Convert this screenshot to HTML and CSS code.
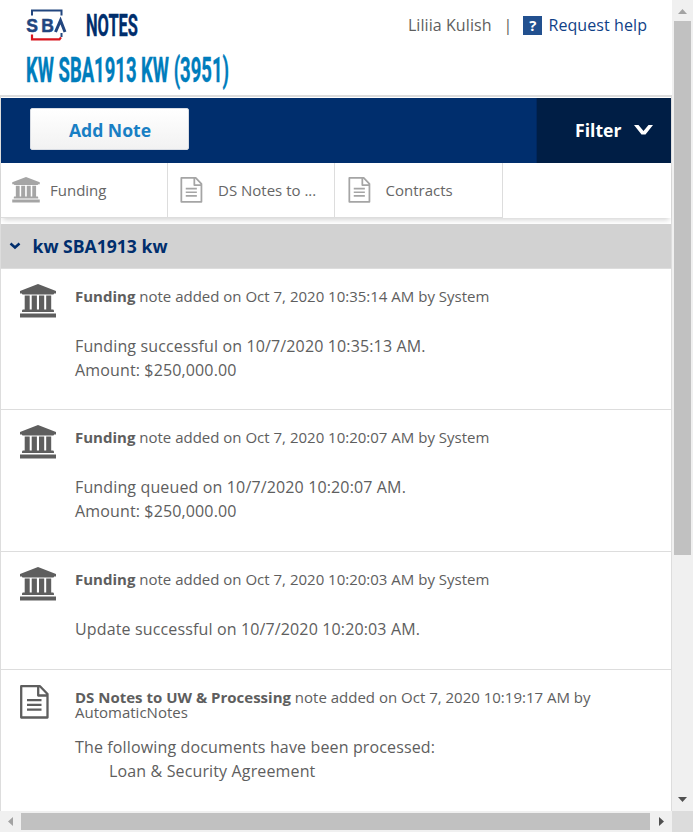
FILE: index.html
```html
<!DOCTYPE html>
<html lang="en">
<head>
<meta charset="utf-8">
<title>SBA Notes</title>
<link rel="stylesheet" href="styles.css">
</head>
<body>
<svg class="defs" width="0" height="0">
  <symbol id="bank" viewBox="0 0 36 34">
    <path d="M18 0 36 7V9.500H34c0 .7-.5 1-1.200 1H3.200c-.7 0-1.200-.3-1.200-1H0V7zM4.700 11.500h5V26h-5zM11.700 11.500h5.200V26h-5.200zM19 11.500h5.200V26H19zM26.200 11.500h5V26h-5zM3 25.500h30c.8 0 1 .8 1 2.500H2c0-1.700.2-2.500 1-2.500zM0 29.500h36V33.500H0z"/>
  </symbol>
  <symbol id="doc" viewBox="0 0 29 34">
    <path fill="none" stroke="currentColor" stroke-width="2.300" stroke-linejoin="round" d="M1.200 1.200H20L27.500 9V32.500H1.200zM18.200 1.200V10.500H27.500"/>
    <path d="M7 14h14.500v2.200H7zM7 18.800h14.500v2.200H7zM7 23.600h14.500v2.200H7z"/>
  </symbol>
</svg>
<div class="window">
  <main class="page">
    <header class="head">
      <div class="head-top">
        <svg class="logo" viewBox="0 0 42 34">
          <path fill="none" stroke="#22467f" stroke-width="2" d="M6 7.500V2.500H35.500V7.500M35.500 25v4"/>
          <path fill="none" stroke="#d8141c" stroke-width="2.200" d="M6 26.500V31.300H33.500l1.500-2"/>
          <text x="0.300" y="24" textLength="27.500" lengthAdjust="spacing">SB</text>
          <path fill="none" stroke="#22467f" stroke-width="3" d="M29.500 24 34.500 12.500 39 24"/>
        </svg>
        <svg class="title" viewBox="0 0 54 30"><text x="0" y="27" textLength="52" lengthAdjust="spacingAndGlyphs">NOTES</text></svg>
        <div class="user"><span>Liliia Kulish</span><span class="bar">|</span><span class="q">?</span><a>Request help</a></div>
      </div>
      <svg class="subtitle" viewBox="0 0 210 36">
        <text x="0" y="30" textLength="203" lengthAdjust="spacingAndGlyphs">KW SBA1913 KW (3951)</text>
      </svg>
    </header>
    <div class="body">
      <nav class="actions">
        <button class="add">Add Note</button>
        <div class="filter">Filter
          <svg width="19" height="10" viewBox="0 0 19 10"><path d="M0 0H4.500L9.500 6 14.500 0H19L11.500 9.500H7.500z"/></svg>
        </div>
      </nav>
      <div class="tabs">
        <div class="tab"><svg class="tab-bank"><use href="#bank"/></svg>Funding</div>
        <div class="tab"><svg class="tab-doc"><use href="#doc"/></svg>DS Notes to ...</div>
        <div class="tab"><svg class="tab-doc"><use href="#doc"/></svg>Contracts</div>
      </div>
      <h2 class="group"><svg width="12" height="8" viewBox="0 0 12 8"><path d="M1.500 1.500 6 5.500 10.500 1.500"/></svg>kw SBA1913 kw</h2>
      <article class="note first">
        <svg class="bank"><use href="#bank"/></svg>
        <div><p class="meta"><b>Funding</b> note added on Oct 7, 2020 10:35:14 AM by System</p>
        <p class="text">Funding successful on 10/7/2020 10:35:13 AM.<br>Amount: $250,000.00</p></div>
      </article>
      <article class="note">
        <svg class="bank"><use href="#bank"/></svg>
        <div><p class="meta"><b>Funding</b> note added on Oct 7, 2020 10:20:07 AM by System</p>
        <p class="text">Funding queued on 10/7/2020 10:20:07 AM.<br>Amount: $250,000.00</p></div>
      </article>
      <article class="note">
        <svg class="bank"><use href="#bank"/></svg>
        <div><p class="meta"><b>Funding</b> note added on Oct 7, 2020 10:20:03 AM by System</p>
        <p class="text">Update successful on 10/7/2020 10:20:03 AM.</p></div>
      </article>
      <article class="note last">
        <svg class="doc"><use href="#doc"/></svg>
        <div><p class="meta"><b>DS Notes to UW &amp; Processing</b> note added on Oct 7, 2020 10:19:17 AM by<br>AutomaticNotes</p>
        <p class="text">The following documents have been processed:<br><span class="indent">Loan &amp; Security Agreement</span></p></div>
      </article>
    </div>
  </main>
  <div class="vbar">
    <svg width="9" height="5" viewBox="0 0 9 5"><path fill="#a3a3a3" d="M0 5 4.500 0 9 5z"/></svg>
    <div class="vthumb"></div>
    <svg class="end" width="9" height="5" viewBox="0 0 9 5"><path fill="#505050" d="M0 0H9L4.500 5z"/></svg>
  </div>
  <div class="hbar">
    <svg width="5" height="9" viewBox="0 0 5 9"><path fill="#a3a3a3" d="M5 0V9L0 4.500z"/></svg>
    <div class="hthumb"></div>
    <svg width="5" height="9" viewBox="0 0 5 9"><path fill="#505050" d="M0 0V9L5 4.500z"/></svg>
  </div>
  <div class="corner"></div>
</div>
</body>
</html>
```
FILE: styles.css
```css
* { box-sizing: border-box; }
body { margin: 0; font: 16px/24px "Open Sans", sans-serif; color: #5e5e5e; background: #fff; overflow: hidden; }
p, h2 { margin: 0; }
.defs { position: absolute; }
.window { display: grid; grid-template-columns: 672px 21px; grid-template-rows: 811px 21px; width: 693px; height: 832px; }
.page { overflow: hidden; }

.head { height: 97px; border-bottom: 2px solid #dcdcdc; padding: 8px 25px 0 26px; }
.head-top { display: flex; height: 42px; }
.logo { width: 42px; height: 34px; }
.logo text { font: bold 17.500px "Liberation Sans", sans-serif; fill: #22467f; stroke: #22467f; stroke-width: .5px; }
.title { width: 54px; height: 30px; margin: 1px 0 0 18px; overflow: visible; }
.title text { font: bold 31px Roboto, sans-serif; fill: #002e6d; stroke: #002e6d; stroke-width: .4px; }
.subtitle { display: block; width: 210px; height: 36px; margin-top: 2px; overflow: visible; }
.subtitle text { font: bold 35px Roboto, sans-serif; fill: #007dbc; stroke: #007dbc; stroke-width: .4px; }
.user { display: flex; margin-left: auto; height: 34px; align-items: center; letter-spacing: .08px; }
.bar { margin: 0 11px 0 12px; }
.q { width: 19px; height: 19px; margin-right: 6px; background: #22508f; color: #fff; font-weight: bold; font-size: 15px; line-height: 19px; text-align: center; }
.user a { color: #0f4187; }

.body { border: solid #ddd; border-width: 0 1px; height: 714px; padding-top: 1px; }
.actions { display: flex; height: 65px; background: #002e6d; align-items: flex-start; }
.add { width: 159px; height: 42px; margin: 10px 0 0 29px; border: 1px solid #d8dce3; border-radius: 2px; background: linear-gradient(#fff, #f2f2f2); color: #197fc4; font: bold 17.600px "Open Sans", sans-serif; padding: 2px 0 0 1px; }
.filter { margin-left: auto; width: 135px; height: 65px; background: #001e45; color: #fff; font-weight: bold; font-size: 17.600px; display: flex; align-items: center; gap: 13px; padding: 0 0 1px 39px; box-shadow: inset 1px 0 #00275f; }
.filter svg { fill: #fff; margin-top: 0; }

.tabs { display: flex; height: 55px; margin-bottom: 6px; box-shadow: 0 4px 5px -2px rgba(0,0,0,.17); }
.tab { width: 167px; border-right: 1px solid #ddd; border-bottom: 1px solid #ddd; display: flex; align-items: center; font-size: 15px; white-space: nowrap; color: #666; }
.tab:last-child { width: 168px; padding-left: .6px; }
.tab svg { fill: #a5a5a5; color: #a5a5a5; flex: none; }
.tab-bank { width: 28px; height: 26px; margin: 0 10px 0 11px; }
.tab-doc { width: 23px; height: 26px; margin: 0 15px 0 12px; }

.group { height: 45px; background: #d2d2d2; border-bottom: 1px solid #ddd; color: #002e6d; font-size: 17.600px; display: flex; align-items: center; padding-left: 8px; }
.group svg { margin-right: 11.500px; fill: none; stroke: #002e6d; stroke-width: 2.500; }

.note { display: flex; padding: 20px 0 28px 19px; border-bottom: 1px solid #ddd; }
.note.first { padding-bottom: 27px; }
.note.last { border: 0; }
.note > svg { flex: none; height: 34px; margin-top: -5px; fill: #5e5e5e; }
.note > .bank { width: 36px; margin-right: 19px; }
.note > .doc { width: 29px; margin-right: 26px; }
.meta { min-height: 30px; margin-bottom: 15px; font-size: 15px; line-height: 15px; }
.text { letter-spacing: .14px; }
.indent { margin-left: 34px; }

.vbar { background: #f0f0f0; display: flex; flex-direction: column; align-items: center; padding: 9px 0 9px; }
.vthumb { width: 17px; height: 534px; margin: 7px 0 0; background: #c1c1c1; }
.vbar .end { margin-top: auto; }
.hbar { background: #f0f0f0; display: flex; align-items: center; padding-left: 8px; }
.hthumb { width: 629px; height: 17px; margin: 0 9px 0 8px; background: #c1c1c1; }
.corner { background: #dcdcdc; }
```
